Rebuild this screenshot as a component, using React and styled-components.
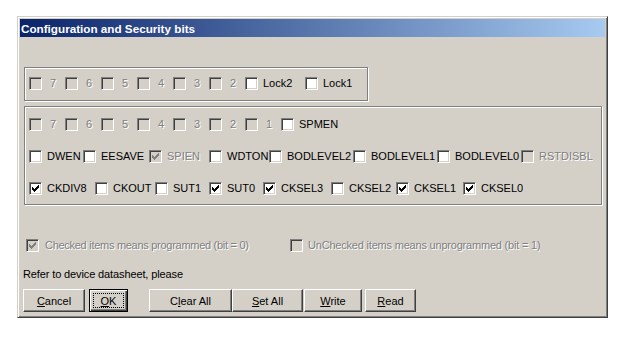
import React from "react";
import styled, { createGlobalStyle } from "styled-components";

const Global = createGlobalStyle`
  html, body { margin: 0; padding: 0; background: #fff; }
  body { font-family: "Liberation Sans", Arial, sans-serif; font-size: 11px; color: #000; }
`;

const Page = styled.div`
  padding: 16px 0 0 17px;
`;

const Window = styled.div`
  box-sizing: border-box;
  width: 591px;
  height: 302px;
  background: #d4d0c8;
  border: 1px solid;
  border-color: #d4d0c8 #404040 #404040 #d4d0c8;
  box-shadow: inset 1px 1px #fff, inset -1px -1px #808080;
  padding: 2px;
  display: flex;
  flex-direction: column;
`;

const TitleBar = styled.div`
  height: 18px;
  flex: 0 0 18px;
  background: linear-gradient(to right, #0a246a, #a6caf0);
  color: #fff;
  font-weight: bold;
  font-size: 11.7px;
  display: flex;
  align-items: center;
  padding-left: 1px;
  white-space: nowrap;
`;

const Client = styled.div`
  display: flex;
  flex-direction: column;
  padding: 30px 0 0 3px;
`;

const Group = styled.div`
  box-sizing: border-box;
  width: ${(p) => p.$w}px;
  margin: ${(p) => p.$mt}px 0 0 1px;
  padding: ${(p) => p.$pad};
  border: 1px solid #808080;
  box-shadow: inset 1px 1px #fff, 1px 1px 0 #fff;
  display: flex;
  flex-direction: column;
  gap: 19px;
`;

const Row = styled.div`
  display: flex;
  align-items: center;
  height: 13px;
`;

const Item = styled.div`
  flex: 0 0 ${(p) => (p.$w ? `${p.$w}px` : "auto")};
  display: flex;
  align-items: center;
  height: 13px;
  overflow: hidden;
  white-space: nowrap;
`;

const Box = styled.span`
  box-sizing: border-box;
  width: 13px;
  height: 13px;
  flex: 0 0 13px;
  border: 1px solid;
  border-color: #808080 #fff #fff #808080;
  box-shadow: inset 1px 1px #404040, inset -1px -1px #d4d0c8;
  background: ${(p) => (p.$disabled ? "#d4d0c8" : "#fff")};
  display: flex;
  align-items: center;
  justify-content: center;
`;

const Label = styled.span`
  margin-left: ${(p) => p.$gap}px;
  line-height: 13px;
  letter-spacing: ${(p) => p.$ls || 0}px;
  color: ${(p) => (p.$disabled ? "#808080" : "#000")};
  text-shadow: ${(p) => (p.$disabled ? "1px 1px 0 #fff" : "none")};
`;

const Legend = styled.div`
  display: flex;
  align-items: center;
  height: 13px;
  margin: 34px 0 0 3px;
`;

const Note = styled.div`
  line-height: 13px;
  margin-top: 16px;
  letter-spacing: -0.12px;
`;

const Buttons = styled.div`
  display: flex;
  margin-top: 8px;
`;

const Btn = styled.button`
  box-sizing: border-box;
  width: ${(p) => p.$w}px;
  height: 23px;
  margin: 0 0 0 ${(p) => p.$ml || 0}px;
  padding: 0;
  background: #d4d0c8;
  font: 11px "Liberation Sans", Arial, sans-serif;
  color: #000;
  border: 1px solid;
  border-color: #fff #404040 #404040 #fff;
  box-shadow: inset -1px -1px #808080;
  display: flex;
  align-items: center;
  justify-content: center;
  outline: none;
`;

const DefaultBtn = styled(Btn)`
  border-color: #000;
  box-shadow: inset 1px 1px #fff, inset -1px -1px #404040, inset -2px -2px #808080;
  align-items: stretch;
`;

const Focus = styled.span`
  flex: 1;
  margin: 3px;
  border: 1px dotted #000;
  display: flex;
  align-items: center;
  justify-content: center;
`;

const CHECK =
  "M6 0h1v1h-1z M5 1h2v1h-2z M0 2h1v1h-1z M4 2h3v1h-3z M0 3h2v1h-2z M3 3h3v1h-3z M0 4h5v1h-5z M1 5h3v1h-3z M2 6h1v1h-1z";

function Check({ label, checked, disabled, w, gap = 5, ls }) {
  return (
    <Item $w={w}>
      <Box $disabled={disabled}>
        {checked && (
          <svg width="7" height="7" viewBox="0 0 7 7" shapeRendering="crispEdges">
            <path d={CHECK} fill={disabled ? "#808080" : "#000"} />
          </svg>
        )}
      </Box>
      <Label $gap={gap} $disabled={disabled} $ls={ls}>
        {label}
      </Label>
    </Item>
  );
}

const digits = (list) =>
  list.map((d) => ({ label: d, disabled: true, w: 36, gap: 8 }));

const lockRow = [
  ...digits(["7", "6", "5", "4", "3", "2"]),
  { label: "Lock2", w: 60 },
  { label: "Lock1" },
];

const rowA = [...digits(["7", "6", "5", "4", "3", "2", "1"]), { label: "SPMEN" }];

const rowB = [
  { label: "DWEN", w: 54 },
  { label: "EESAVE", w: 66 },
  { label: "SPIEN", w: 60, checked: true, disabled: true },
  { label: "WDTON", w: 60 },
  { label: "BODLEVEL2", w: 84 },
  { label: "BODLEVEL1", w: 84 },
  { label: "BODLEVEL0", w: 84 },
  { label: "RSTDISBL", disabled: true },
];

const rowC = [
  { label: "CKDIV8", w: 66, checked: true },
  { label: "CKOUT", w: 60 },
  { label: "SUT1", w: 54 },
  { label: "SUT0", w: 54, checked: true },
  { label: "CKSEL3", w: 68, checked: true },
  { label: "CKSEL2", w: 65 },
  { label: "CKSEL1", w: 67, checked: true },
  { label: "CKSEL0", checked: true },
];

const renderRow = (items) => (
  <Row>
    {items.map((it, i) => (
      <Check key={i} {...it} />
    ))}
  </Row>
);

export default function App() {
  return (
    <>
      <Global />
      <Page>
        <Window>
          <TitleBar>Configuration and Security bits</TitleBar>
          <Client>
            <Group $w={344} $mt={0} $pad="9px 0 10px 4px">
              {renderRow(lockRow)}
            </Group>
            <Group $w={578} $mt={5} $pad="11px 0 9px 4px">
              {renderRow(rowA)}
              {renderRow(rowB)}
              {renderRow(rowC)}
            </Group>
            <Legend>
              <Check
                w={264}
                gap={6}
                ls={-0.28}
                checked
                disabled
                label="Checked items means programmed (bit = 0)"
              />
              <Check
                disabled
                ls={-0.2}
                label="UnChecked items means unprogrammed (bit = 1)"
              />
            </Legend>
            <Note>Refer to device datasheet, please</Note>
            <Buttons>
              <Btn $w={62}>
                <span>
                  <u>C</u>ancel
                </span>
              </Btn>
              <DefaultBtn $w={39} $ml={4}>
                <Focus>
                  <u>O</u>K
                </Focus>
              </DefaultBtn>
              <Btn $w={83} $ml={21}>
                <span>
                  C<u>l</u>ear All
                </span>
              </Btn>
              <Btn $w={71} $ml={0}>
                <span>
                  <u>S</u>et All
                </span>
              </Btn>
              <Btn $w={58} $ml={1}>
                <span>
                  <u>W</u>rite
                </span>
              </Btn>
              <Btn $w={51} $ml={3}>
                <span>
                  <u>R</u>ead
                </span>
              </Btn>
            </Buttons>
          </Client>
        </Window>
      </Page>
    </>
  );
}
